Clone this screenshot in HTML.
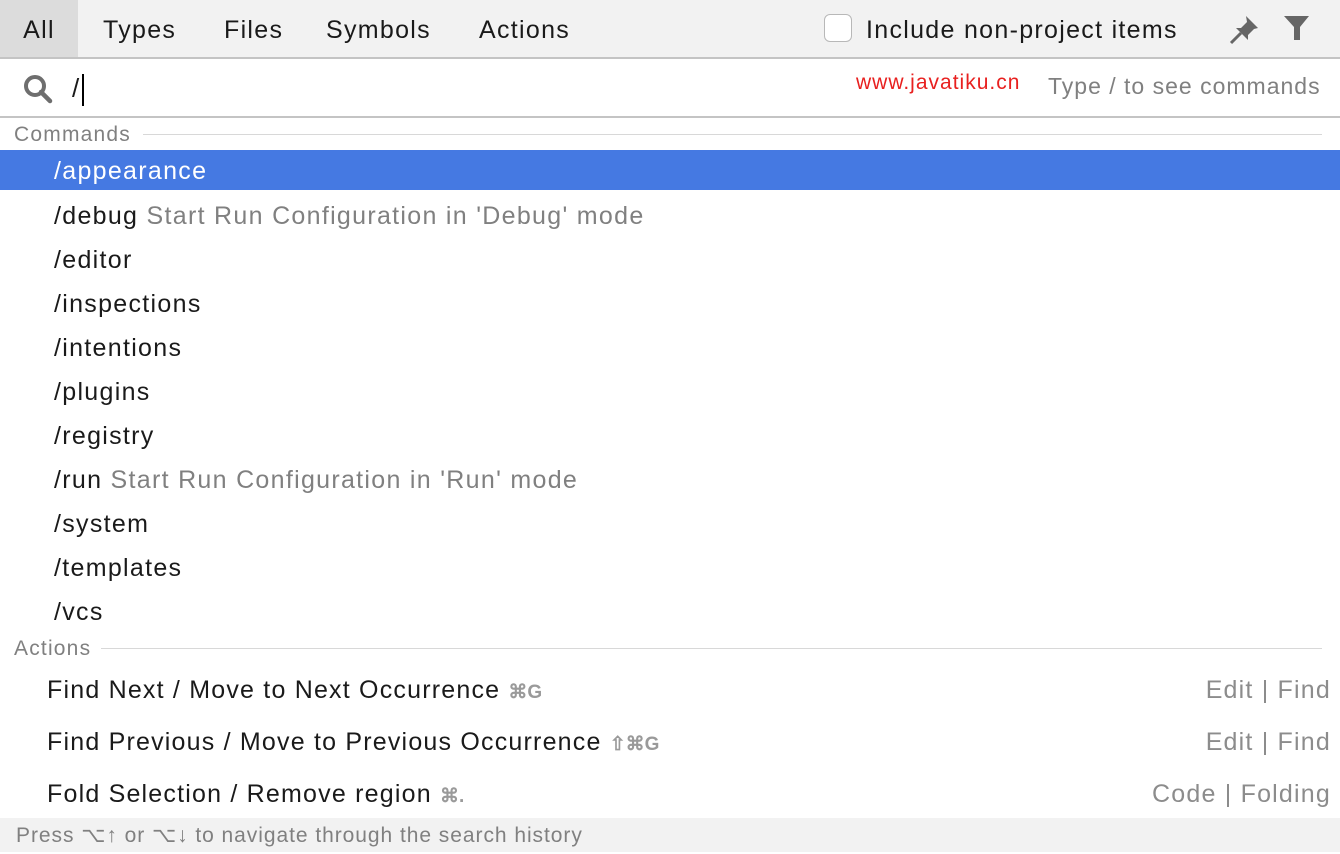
<!DOCTYPE html>
<html><head><meta charset="utf-8"><style>
*{margin:0;padding:0;box-sizing:border-box}
body{width:1340px;height:852px;overflow:hidden;background:#fff;font-family:"Liberation Sans",sans-serif;color:#1a1a1a;position:relative}
.tabs{position:absolute;left:0;top:0;width:1340px;height:59px;background:#f2f2f2;border-bottom:2px solid #c4c4c4}
.tab{position:absolute;top:2px;height:57px;line-height:57px;font-size:25px;letter-spacing:1.3px}
.search{position:absolute;top:59px;left:0;width:1340px;height:59px;border-bottom:2px solid #c4c4c4}
.abs{position:absolute;white-space:nowrap}
.hdr{position:absolute;left:14px;font-size:21px;color:#808080;letter-spacing:1.2px}
.line{position:absolute;height:1px;background:#d8d8d8;right:18px}
.row{position:absolute;left:0;width:1340px;height:40px;line-height:40px;font-size:25px;padding-left:54px;white-space:nowrap;letter-spacing:1.3px}
.g{color:#808080}
.act{position:absolute;left:47px;font-size:25px;white-space:nowrap;letter-spacing:1.2px}
.r{position:absolute;right:9px;font-size:25px;color:#8c8c8c;white-space:nowrap;letter-spacing:1.2px}
.k{font-size:19px;color:#9a9a9a;font-weight:bold;letter-spacing:0}
</style></head><body>
<div class="tabs">
<div class="tab" style="left:0;width:78px;top:0;height:57px;line-height:61px;background:#dcdcdc;text-align:center">All</div>
<div class="tab" style="left:103px">Types</div>
<div class="tab" style="left:224px">Files</div>
<div class="tab" style="left:326px">Symbols</div>
<div class="tab" style="left:479px">Actions</div>
<div class="abs" style="left:824px;top:14px;width:28px;height:28px;border:1px solid #b8b8b8;border-radius:6px;background:#fff"></div>
<div class="tab" style="left:866px">Include non-project items</div>
<svg class="abs" style="left:1228px;top:13px" width="34" height="32" viewBox="0 0 34 32"><path d="M18 3 L30 15 L26 16 L20 22 L20 27 L8 15 L13 15 L19 9 Z" fill="#666"/><path d="M13 20 L3 30" stroke="#666" stroke-width="3"/></svg>
<svg class="abs" style="left:1283px;top:15px" width="28" height="28" viewBox="0 0 28 28"><path d="M1 1 H26 L17 12 V25 H11 V12 Z" fill="#666"/></svg>
</div>
<div class="search">
<svg class="abs" style="left:22px;top:14px" width="32" height="32" viewBox="0 0 32 32"><circle cx="13" cy="13" r="9" fill="none" stroke="#6e6e6e" stroke-width="4"/><path d="M19 19 L28 28" stroke="#6e6e6e" stroke-width="4.5" stroke-linecap="round"/></svg>
<div class="abs" style="left:72px;top:14px;font-size:26px">/</div>
<div class="abs" style="left:82px;top:15px;width:2px;height:32px;background:#000"></div>
<div class="abs" style="left:856px;top:12px;font-size:21px;color:#e8201f;letter-spacing:1px">www.javatiku.cn</div>
<div class="abs" style="left:1048px;top:14px;font-size:23px;color:#808080;letter-spacing:1px">Type / to see commands</div>
</div>
<div class="hdr" style="top:123px">Commands</div>
<div class="line" style="left:143px;top:134px"></div>
<div class="row" style="top:150px;background:#4579e2;color:#fff;line-height:43px">/appearance</div>
<div class="row" style="top:196px">/debug <span class="g">Start Run Configuration in 'Debug' mode</span></div>
<div class="row" style="top:240px">/editor</div>
<div class="row" style="top:284px">/inspections</div>
<div class="row" style="top:328px">/intentions</div>
<div class="row" style="top:372px">/plugins</div>
<div class="row" style="top:416px">/registry</div>
<div class="row" style="top:460px">/run <span class="g">Start Run Configuration in 'Run' mode</span></div>
<div class="row" style="top:504px">/system</div>
<div class="row" style="top:548px">/templates</div>
<div class="row" style="top:592px">/vcs</div>
<div class="hdr" style="top:637px">Actions</div>
<div class="line" style="left:101px;top:648px"></div>
<div class="act" style="top:676px">Find Next / Move to Next Occurrence <span class="k">⌘G</span></div>
<div class="r" style="top:676px">Edit | Find</div>
<div class="act" style="top:728px">Find Previous / Move to Previous Occurrence <span class="k">⇧⌘G</span></div>
<div class="r" style="top:728px">Edit | Find</div>
<div class="act" style="top:780px">Fold Selection / Remove region <span class="k">⌘.</span></div>
<div class="r" style="top:780px">Code | Folding</div>
<div class="abs" style="left:0;top:818px;width:1340px;height:34px;background:#f2f2f2;padding-left:16px;line-height:36px;font-size:21px;color:#808080;letter-spacing:0.95px">Press ⌥↑ or ⌥↓ to navigate through the search history</div>
</body></html>
